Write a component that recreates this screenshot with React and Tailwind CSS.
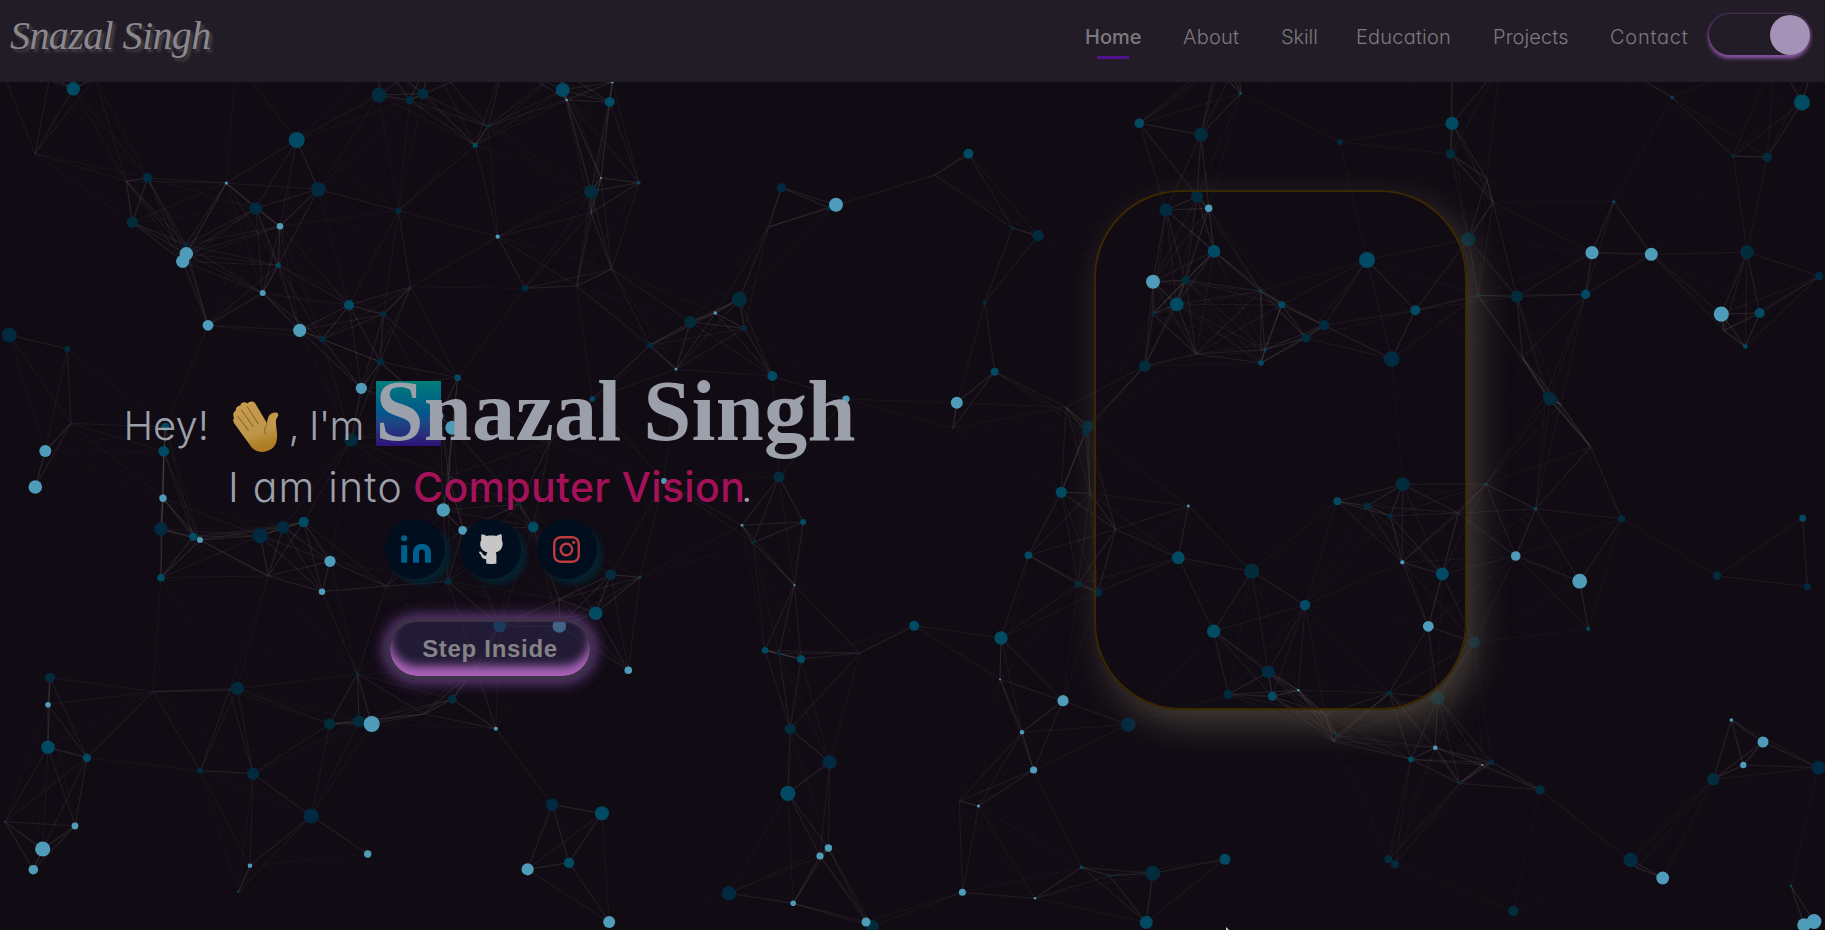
import React from "react";
import { BsInstagram } from "react-icons/bs";

const COLORS = { A: "#022c3b", B: "#01293f", C: "#004b63", D: "#4e9cb9" };

// x, y, radius, colour key
const NODES = [
  [73.3,88.7,6.8,"C"],[35,153.7,0.8,"A"],[296.7,140,8,"C"],[379,95,7.5,"A"],[409.7,100.3,4,"B"],[423,93.7,5.5,"A"],
  [147.7,178,5,"B"],[126.3,181,0.6,"A"],[132.3,222.3,5.7,"A"],[226.3,183,1.5,"D"],[318.3,189.3,7.4,"B"],[255.7,208.3,6.3,"B"],
  [280,226.3,3.3,"D"],[398.3,210.7,3,"A"],[185.7,244.7,2.3,"B"],[186.3,253.7,6.8,"D"],[182.7,261.3,6.6,"D"],[278.3,265.3,2.5,"C"],
  [262.7,293,3,"D"],[208,325.3,5.4,"D"],[299.7,330.3,6.6,"D"],[349,305,5,"C"],[383.3,314.3,3,"A"],[410.7,287,0.9,"A"],
  [322.3,339.3,3.4,"A"],[380.3,362,3.4,"B"],[9.3,335,7.5,"B"],[67.3,349,3.1,"A"],[457.7,377.7,3.3,"C"],[361.3,388.3,5.6,"D"],
  [71,423.3,0.7,"A"],[45.3,451,6,"D"],[35.3,487,6.8,"D"],[165.3,427,4,"C"],[163.7,451.3,5.4,"C"],[163,498.3,3.7,"D"],
  [351,440,6.8,"A"],[452.3,427.7,7,"D"],[440,415.7,3.5,"D"],[448.7,476,1.2,"A"],[443.3,510,6.7,"D"],[462.7,530.3,4.4,"D"],
  [562.7,90,7,"C"],[566.7,100,1.3,"D"],[612.3,82,1.5,"D"],[609.7,102,5,"C"],[488,126.3,1.7,"A"],[475.3,145.3,2.5,"C"],
  [601,178,1,"D"],[639,182.7,1.5,"C"],[591,191.7,6.8,"A"],[591,212.7,1,"C"],[497.7,236.7,2.1,"D"],[525,288.3,3.3,"B"],
  [576.7,286,1,"A"],[611.7,269.3,1,"A"],[781.3,187.7,4.6,"B"],[829.7,208,2.7,"A"],[836,204.7,7,"D"],[768.7,227,1.2,"B"],
  [739.3,299.3,7.6,"A"],[715.3,313,1.8,"D"],[690.3,322,6,"A"],[744.3,328.3,2.8,"A"],[650,345.3,3,"B"],[676,369.3,1.3,"D"],
  [772.3,376,5,"C"],[846,399,3.6,"D"],[592.3,399,2.7,"C"],[550,441.7,1,"A"],[664,481,3,"D"],[779,477,5.6,"A"],
  [161,529,6.8,"B"],[193.3,536.7,4.2,"C"],[200,540,3,"D"],[260.3,535.7,7.6,"B"],[283,527.3,6.3,"B"],[303.7,522,5.2,"C"],
  [330,561.3,5.6,"D"],[322,591.7,3.2,"D"],[161,577.7,3.8,"C"],[268.3,576,0.8,"A"],[386.3,586,0.8,"A"],[448,581.3,3.5,"A"],
  [50,677.7,5,"A"],[48,704.7,2.8,"D"],[48,747.3,6.8,"C"],[87,757.7,4.2,"C"],[153,691.7,1.2,"B"],[229.3,690.3,1.3,"A"],
  [237.3,688.3,6.6,"A"],[357.3,674,1.8,"A"],[200.3,770.7,3,"A"],[253,773.7,6.2,"B"],[329.7,724,5.6,"A"],[359,721.3,6,"A"],
  [371.7,724,8,"D"],[452.3,699.3,4.5,"A"],[424,714,1,"A"],[5,821.7,1,"C"],[75,826,3.4,"D"],[42.7,849,7.6,"D"],
  [33.3,869.7,4.8,"D"],[311.3,816,7.6,"B"],[367.7,854,3.7,"D"],[250,865.7,2.3,"D"],[238.3,892,1.1,"C"],
  [533.3,527,5.4,"C"],[610.7,574.7,5.5,"A"],[640,577.3,1.3,"C"],[595.7,613.3,6.8,"C"],[499.7,626,6.3,"C"],[559.3,626,6.8,"D"],
  [628.3,670.3,3.8,"D"],[559.3,599.3,0.8,"A"],[475.7,668.3,3.3,"A"],[519.3,504.3,1.8,"A"],
  [742,525.3,1.4,"D"],[803.2,522,3,"C"],[753,542.7,1.8,"A"],[794.4,585,1.1,"D"],[1028.5,555.3,3.8,"C"],[914.2,625.7,5,"C"],
  [1001,638,6.7,"C"],[765,650.3,3.3,"C"],[779,653.7,2.3,"B"],[801,659,4,"C"],[859.8,653,1.3,"B"],[1000,679.3,0.9,"D"],
  [790.2,729,5.6,"A"],[829.6,762,7,"B"],[1022,732.3,2.2,"D"],[1033.6,770,3.6,"D"],[787.9,793.3,7.6,"C"],[959.3,801,0.8,"A"],
  [978.5,806,1.6,"D"],[552.1,804.7,6.3,"B"],[601.9,813.3,7.1,"C"],[527.6,869.3,6.1,"D"],[569,862.7,5.2,"C"],[609.2,922,6,"D"],
  [828.4,848,3.7,"D"],[820,856,3.6,"D"],[729,893.3,7.3,"B"],[793.2,903.3,2.8,"D"],[872.5,926.5,6.4,"A"],[866,922,4.5,"D"],
  [962.4,892.3,3.5,"D"],[1035,898.3,1.3,"D"],[495.9,728.7,2,"D"],
  [968.5,153.7,5,"C"],[934.7,175,0.8,"A"],[1012.6,228,1.5,"A"],[1038,235.7,5.8,"A"],[994.7,371.7,4,"C"],[956.8,402.7,6,"D"],
  [984.7,302.6,2,"A"],[953,428,0.7,"A"],
  [1139.3,123.3,4.8,"C"],[1201,134.7,7,"A"],[1240.7,93.3,1.6,"C"],[1340,142,3,"B"],[1452,123.3,6.6,"C"],[1450.7,154,4.8,"A"],
  [1197,196.7,6,"A"],[1166,210,6.6,"B"],[1208.7,208.3,3.7,"D"],[1214,251.3,6.3,"C"],[1153,281.7,7,"D"],[1185.7,280.3,4,"A"],
  [1176.7,304.3,6.9,"C"],[1153,314,2,"B"],[1144.7,366,5.8,"A"],[1196,354,1,"A"],[1260.7,291,1.4,"C"],[1281.7,304.7,3.5,"C"],
  [1264.7,349.7,1.8,"C"],[1261,363,2.8,"C"],[1306,338,4.6,"B"],[1324,325.3,5.3,"B"],[1367,260,8,"C"],[1415.3,310.3,5,"C"],
  [1391.7,359,7.9,"B"],[1468.3,239.3,7,"A"],[1478,295.3,2.4,"A"],[1087.7,426.3,5.6,"A"],[1085.7,431.7,3.6,"B"],[1066,407.3,0.9,"A"],
  [1061.3,492.3,5.6,"C"],[1090,493,0.7,"A"],[1402.7,484.3,7,"A"],
  [1188.3,506,1.4,"D"],[1115.7,529.3,0.8,"A"],[1178.3,557.7,6.4,"C"],[1251.7,571.3,7.5,"A"],[1078,584.3,3.2,"A"],[1097.7,592.3,4.4,"B"],
  [1213.7,631.3,6.7,"C"],[1305,605,5.2,"C"],[1337.3,501.3,4,"C"],[1367.3,506,3.6,"A"],[1390.3,516,2.6,"B"],[1402.3,562.3,2.1,"D"],
  [1442.3,574,6.5,"C"],[1458.3,513,0.8,"A"],[1428.3,626.3,5.4,"D"],[1474.3,642.3,5.6,"A"],[1268.3,672,6.5,"B"],[1228.3,694.3,4.8,"B"],
  [1272.3,696.3,4.5,"C"],[1298.3,690.3,1.3,"D"],[1389.3,693,2.4,"B"],[1437.7,698,6.8,"A"],[1337,735.3,2.2,"A"],[1333.7,741.3,0.8,"A"],
  [1325,714.3,1,"A"],[1063,700.7,5.6,"D"],[1128.3,724.7,7.3,"B"],[1435.3,747.7,2.3,"D"],[1411,759.3,2.9,"C"],[1482.3,765,1.1,"D"],
  [1459.7,783.3,1.8,"A"],[1081.7,867.3,1.8,"C"],[1109.3,875.7,1.6,"B"],[1152.7,873.3,7.5,"A"],[1225,859.3,5.5,"C"],[1146.3,922.3,6.5,"C"],
  [1388.3,859.3,4,"A"],[1395,864.3,4,"A"],
  [1486.7,178.6,0.8,"A"],[1493,202.2,0.8,"A"],[1516.7,296.5,6,"A"],[1522.7,358,0.8,"A"],[1546,395.3,3.5,"A"],[1550,399,6.5,"A"],
  [1560.7,404.6,0.9,"C"],[1590.7,446.9,1,"B"],[1486,484.1,1.4,"C"],[1535.7,508.8,1.7,"C"],[1515.7,556,4.8,"D"],[1621.7,518.7,3.5,"A"],
  [1579.7,581.2,7.4,"D"],[1588.3,629,2,"C"],[1672,97.4,1.7,"C"],[1802,102.4,8,"C"],[1733.3,156.1,2,"B"],[1767.3,157.2,4.7,"A"],
  [1613.7,201.6,1.7,"C"],[1592,252.7,6.6,"D"],[1651.3,254.3,6.5,"D"],[1585.7,294.3,4.7,"C"],[1747,252.1,6.8,"A"],[1819.3,276.2,4.2,"B"],
  [1721.3,314.1,7.6,"D"],[1759.7,313,5,"C"],[1724,330.5,0.8,"A"],[1745.3,346.5,2.3,"C"],[1802.7,518.2,3.4,"C"],[1807.3,586.7,3.4,"B"],
  [1717,575.8,4.3,"A"],[1731.3,720,1.8,"D"],[1763,742,5.5,"D"],[1743.3,765,3.2,"D"],[1818.3,767.7,7,"B"],[1713.3,779.3,6.3,"A"],
  [1540,789.7,4.8,"A"],[1491.7,762.3,2.6,"B"],[1630.7,860,7.2,"B"],[1637.3,868,0.8,"A"],[1662.7,878,6.4,"D"],[1791,885.7,1.2,"C"],
  [1513.3,911,5.3,"A"],[1804,925,6.8,"D"],[1814,921.5,7.4,"D"],
  [430,58,2,"A"],[505,60,2,"A"],[560,70,2,"A"],[380,58,2,"A"],[1222,55,2,"A"],[1238,60,2,"A"],[1215,68,2,"A"],[1452,55,2,"A"],
  [1500,66,2,"A"],[1775,55,2,"A"],[1815,58,2,"A"],[1630,72,2,"A"],[0,64,2,"A"],[50,76,2,"A"],[95,78,2,"A"],[236,62,2,"A"],
];

const REACH = 150;

const LINKS = [];
NODES.forEach((a, i) => {
  for (let j = i + 1; j < NODES.length; j++) {
    const b = NODES[j];
    const d = Math.hypot(a[0] - b[0], a[1] - b[1]);
    if (d < REACH) LINKS.push([a[0], a[1], b[0], b[1], 0.22 * (1 - d / REACH)]);
  }
});

function Constellation() {
  return (
    <svg className="absolute inset-0 h-[930px] w-[1825px]" viewBox="0 0 1825 930" aria-hidden="true">
      <g stroke="#a89f8c" strokeWidth="1.2">
        {LINKS.map(([x1, y1, x2, y2, o], i) => (
          <line key={i} x1={x1} y1={y1} x2={x2} y2={y2} strokeOpacity={o} />
        ))}
      </g>
      {NODES.map(([x, y, r, c], i) => (
        <circle key={i} cx={x} cy={y} r={r} fill={COLORS[c]} />
      ))}
    </svg>
  );
}

function WavingHand() {
  return (
    <svg viewBox="0 0 46 52" className="h-[52px] w-[46px]" aria-hidden="true">
      <defs>
        <linearGradient id="palm" x1="0" y1="0" x2="0.25" y2="1">
          <stop offset="0" stopColor="#c79c50" />
          <stop offset="0.7" stopColor="#c0964a" />
          <stop offset="1" stopColor="#ad7c24" />
        </linearGradient>
      </defs>
      <path
        fill="url(#palm)"
        d="M7.2 4.5C8.4 1.3 11.6.2 14.4 2.600C16.400-.2 20.400-.4 22.300 2.400L34 22.300C34.200 18 35.600 13.700 39 12.200C41.600 11.200 45.400 11.200 45.300 13.800C45.200 15.500 43.800 16.400 43.200 18.500C42.200 22.500 44.200 29.500 44.100 35C44.100 41.600 42 45.800 37.400 48.600C31 52.400 23 51.600 18.600 46.200L2.400 24C-.4 20-.4 17.800 1.200 17.400C-.6 13.400.4 10.800 2.800 9.400C2.600 6.800 4.200 4.700 7.200 4.500Z"
      />
      <g stroke="#8f6a2c" strokeWidth="1.1" fill="none" strokeLinecap="round">
        <path d="M14.400 6L25.200 22.600" />
        <path d="M8.400 9L20.400 25.800" />
        <path d="M4.600 15L15.400 29.400" />
        <path d="M34 22.300C34.300 24.500 31.500 26 31.600 29C31.600 30.600 32 32.200 32.400 33.400" />
      </g>
    </svg>
  );
}

function LinkedIn() {
  return (
    <svg viewBox="0 0 30 28" className="ml-[3px] h-[28px] w-[30px]" fill="#00608a" aria-hidden="true">
      <circle cx="3.2" cy="3.2" r="3" />
      <rect x="0.2" y="10.2" width="6" height="17.6" rx="0.3" />
      <path d="M12 27.800V17.800C12 12.600 15.600 8.700 21 8.700C26.400 8.700 30 12.600 30 17.800V27.800H23.900V17.600C23.900 15.800 22.800 14.600 21 14.600C19.200 14.600 18.100 15.800 18.100 17.600V27.800Z" />
    </svg>
  );
}

function Octocat() {
  return (
    <svg viewBox="0 0 24 30" className="ml-px h-[30px] w-[24px]" fill="#c6c6c6" aria-hidden="true">
      <path d="M2.600.2C4.400.2 6.200 1 7.600 1.900C10.400 1.400 14.600 1.400 17.200 1.900C18.800.8 20.800.2 22.400.2C23 2 23 4.200 22.700 5.600C23.900 8 24 11.200 22.800 13.800C21.600 16.400 19.400 17.800 16.600 18.300C17.200 19 17.400 20.200 17.400 21.400V29.600C14.400 30.200 10.200 30.200 7.200 29.600V25.200C4.600 25.400 3 24 2.400 22.300C1.900 20.600.9 19.600 0 18.400C0 17.300 2 17.100 3.200 19.300C4 21 5.400 22 7.200 21.700C7.300 20.200 7.700 19.100 8.400 18.300C5.400 17.800 3.200 16.400 2 13.800C.8 11.200 1 8 2.300 5.600C2 4.200 2 2 2.600.2Z" />
    </svg>
  );
}

const SANS = "font-['Inter','Noto_Sans',sans-serif] [font-feature-settings:'cv11'_1]";

const NAV = [
  { label: "About", cls: "w-[98px] tracking-[0.2px]" },
  { label: "Skill", cls: "w-[75px] tracking-[-0.1px]" },
  { label: "Education", cls: "w-[137px] tracking-[0.2px]" },
  { label: "Projects", cls: "w-[117px] tracking-[0.1px]" },
  { label: "Contact", cls: "w-[98px] tracking-[0.75px]" },
];

function Header() {
  return (
    <header className="relative z-10 flex h-[82px] items-start justify-between bg-[#221c26] pl-2.5">
      <div className="pt-[12px] font-['Z003','Liberation_Serif',cursive] text-[40px] leading-[48px] font-normal whitespace-nowrap text-[#8b888d] italic tracking-[-0.6px] [text-shadow:3px_3px_3px_#474247]">
        Snazal Singh
      </div>
      <div className="flex">
        <nav className={`${SANS} flex pt-[22px] text-[20px] leading-[30px] font-light text-[#7d797f]`}>
          <a className="flex w-[98px] flex-col font-medium">
            <span>Home</span>
            <span className="mt-1 ml-3 h-[3px] w-8 bg-[#50128c]" />
          </a>
          {NAV.map((n) => (
            <a key={n.label} className={n.cls}>
              {n.label}
            </a>
          ))}
        </nav>
        <div className="mt-[14px] ml-px mr-[15px] flex h-[41px] w-[101px] justify-end rounded-full bg-[#221c26] shadow-[0_0_3px_#71478a,0_3px_4px_#9a5fb4]">
          <div className="mt-px size-[40px] rounded-full bg-[#a593b7]" />
        </div>
      </div>
    </header>
  );
}

function Social({ children }) {
  return (
    <a className="flex size-[60px] items-center justify-center rounded-full bg-[#000e1d] shadow-[6px_6px_5px_#06202c]">
      {children}
    </a>
  );
}

export default function App() {
  return (
    <div className="relative h-[930px] w-[1825px] overflow-hidden bg-[#110b14]">
      <Constellation />
      <Header />
      <main className="relative flex h-[848px]">
        <section className="flex w-[1094px] flex-col pt-[284px]">
          <h1 className={`${SANS} flex h-[98px] items-baseline pl-[123.500px] text-[40px] leading-[98px] font-light whitespace-nowrap text-[#9ca0ab]`}>
            <span className="w-[109px] tracking-[0px]">Hey!</span>
            <span className="w-[56px] self-start pt-[35px]">
              <WavingHand />
            </span>
            <span className="w-[20.5px]">,</span>
            <span className="w-[66.5px] tracking-[-0.8px]">I'm</span>
            <span className="flex font-['Liberation_Serif',serif] text-[86.400px] font-bold tracking-[0.2px]">
              <span className="mt-[15px] h-[65px] w-[65px] self-start bg-linear-to-b from-[#007d7a] via-[#00568a] to-[#2c0f76] leading-[60px]">
                Snazal&nbsp;Singh
              </span>
            </span>
          </h1>
          <p className={`${SANS} -mt-px flex pl-[228px] text-[41px] leading-[48px] font-light whitespace-nowrap text-[#9ca0ab]`}>
            <span className="w-[185px] tracking-[1.2px]">I am into</span>
            <span className="w-[328px] font-medium tracking-[0.35px] text-[#a31259]">Computer Vision</span>
            <span>.</span>
          </p>
          <div className="mt-[8px] flex gap-4 pl-[384.500px]">
            <Social>
              <LinkedIn />
            </Social>
            <Social>
              <Octocat />
            </Social>
            <Social>
              <BsInstagram size={27} color="#be3a3e" />
            </Social>
          </div>
          <button className="mt-[39px] ml-[386px] h-[62px] w-[208px] rounded-full border-4 border-[#3f304b] bg-[#342c55]/50 pb-0 font-['Liberation_Sans',sans-serif] text-[24px] leading-none font-bold tracking-[0.700px] whitespace-nowrap text-[#858387] shadow-[0_0_14px_3px_#643f80,inset_0_-10px_10px_#a962b8]">
            Step Inside
          </button>
        </section>
        <section className="pt-[108px]">
          <div className="h-[520px] w-[373px] rounded-[87px] border-2 border-[#3a2900] shadow-[9px_14px_34px_rgba(90,84,70,0.68)]" />
        </section>
      </main>
      <svg className="absolute top-[926px] left-[1226px] h-1 w-1" viewBox="0 0 4 4" aria-hidden="true">
        <path d="M0 1L3 4H0Z" fill="#d5d5d5" />
      </svg>
    </div>
  );
}
